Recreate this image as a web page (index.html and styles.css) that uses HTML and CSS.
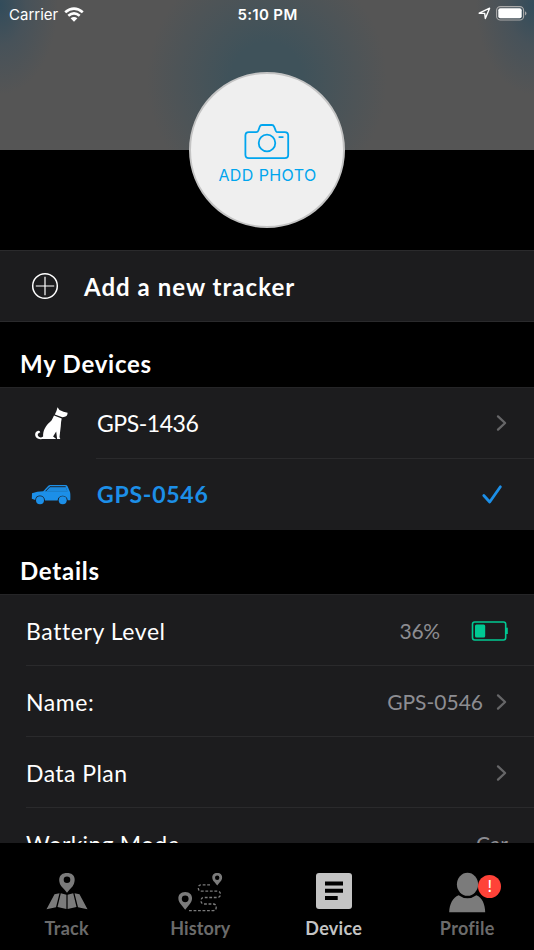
FILE: index.html
```html
<!DOCTYPE html>
<html lang="en">
<head>
<meta charset="utf-8">
<title>Device</title>
<link rel="stylesheet" href="styles.css">
</head>
<body>
<div class="app">
  <header class="hero">
    <div class="status">
      <div class="status-left"><span class="carrier">Carrier</span>
        <svg width="20" height="15" viewBox="0 0 20 15" fill="none" stroke="#fff" stroke-width="2.7"><path d="M1.2 5.3Q10-2.1 18.8 5.3M4.3 8.7Q10 4.2 15.7 8.7"/><path d="M6.6 11.2Q10 8.6 13.4 11.2L10 14.8Z" fill="#fff" stroke="none"/></svg>
      </div>
      <span class="clock">5:10 PM</span>
      <div class="status-right">
        <svg width="13" height="13" viewBox="0 0 13 13" fill="none" stroke="#fff" stroke-width="1.4" stroke-linejoin="round"><path d="M1.2 6.2 11.6 1.2 7.3 11.5 6.7 6.4Z"/></svg>
        <svg width="32" height="15" viewBox="0 0 32 15"><rect x=".6" y=".6" width="27" height="13.4" rx="3.8" fill="none" stroke="#aaa" stroke-width="1.1"/><rect x="2.3" y="2.3" width="23.4" height="10" rx="2" fill="#fff"/><path d="M29 5.2q3 2.1 0 4.3Z" fill="#aaa"/></svg>
      </div>
    </div>
  </header>
  <div class="photo-area">
    <div class="photo">
      <svg width="46" height="38" viewBox="0 0 46 38" fill="none" stroke="#00a5ee" stroke-width="1.8" stroke-linejoin="round" stroke-linecap="round"><path d="M4.8 9.2H12.2Q13.8 9.2 14.3 7.8L15.7 3.8Q16.3 2 18 2H27.8Q29.5 2 30.2 3.8L31.8 7.8Q32.4 9.2 34 9.2H40.8Q44.2 9.2 44.2 12.6V31.8Q44.2 35.2 40.8 35.2H4.8Q1.4 35.2 1.4 31.8V12.6Q1.4 9.2 4.8 9.2Z"/><circle cx="23" cy="20" r="8.3"/><path d="M35.3 14.1H38.8"/></svg>
      <span class="photo-label">ADD PHOTO</span>
    </div>
  </div>
  <main class="content">
    <div class="add-row">
      <svg width="28" height="28" viewBox="0 0 28 28" fill="none" stroke="#fff"><circle cx="14" cy="14" r="12.3" stroke-width="1.5"/><path d="M14 4.8V23.2M4.8 14H23.2" stroke-width="1.2"/></svg>
      <span class="add-label">Add a new tracker</span>
    </div>
    <h2 class="title title-devices">My Devices</h2>
    <section class="list">
      <div class="device">
        <div class="device-icon dog"><svg width="40" height="40" viewBox="0 0 40 40"><path d="M24.5 5.2 26.5 8 30.5 9.7 34.6 10.8Q34.6 14.2 31.8 14.8L29.4 15.2 21.8 12.4Q23.8 9 24.5 5.2ZM21 13.5 28.7 16.5Q27.8 20.5 27.8 24L26.5 35 27.3 37H24.1L23.2 29.5 20.1 34.5 23.3 37H9C1.5 38.5 0 30 5.1 28.8Q7.2 28.6 7.3 30.3L5.2 31.5C3.5 33.8 7 37 10.1 34.5 9.8 28 13 23.5 17 20 19.5 18 19.7 15.8 21 13.5Z" fill="#fff"/></svg></div>
        <div class="device-main divided"><span class="device-name">GPS-1436</span><svg class="chevron" width="12" height="18" viewBox="0 0 12 18"><path d="M2 2.4 9.1 9 2 15.6"/></svg></div>
      </div>
      <div class="device">
        <div class="device-icon"><svg width="40" height="22" viewBox="0 0 40 22" fill="#1c8fe8"><path fill-rule="evenodd" d="M1 9.3Q6 7.3 12.2 7.2L17.3 1.8Q18 1 19.3 1H34.2Q36 1 36.7 2.4L39 8Q39.6 10 39.3 16.3H36.7C36.3 10.2 27 10.2 26.6 16.4H14C13.5 10.2 4.7 10 4.2 16L.8 14.8ZM14.6 7.2H36.4L34.6 2.9H19.2Z"/><circle cx="9" cy="16.2" r="4"/><circle cx="31.7" cy="16.2" r="4"/><path d="M14.4 7.4 18.4 3H34.8L36.5 7.4Z" opacity=".95"/><path d="M14.6 7.2 18.9 2.7H34.7" fill="none" stroke="#1c1c1e" stroke-width=".9"/></svg></div>
        <div class="device-main"><span class="device-name selected">GPS-0546</span><svg class="check" width="22" height="22" viewBox="0 0 22 22"><path d="M2.8 11.5 8.7 18 19.4 2.8" fill="none" stroke="#1c8fe8" stroke-width="2.8" stroke-linecap="round" stroke-linejoin="round"/></svg></div>
      </div>
    </section>
    <h2 class="title title-details">Details</h2>
    <section class="list details">
      <div class="detail"><span class="label battery-label">Battery Level</span><span class="value percent">36%</span><svg class="battery" width="38" height="22" viewBox="0 0 38 22"><rect x="1.5" y="2" width="33.2" height="18" rx="2.2" fill="none" stroke="#00c993" stroke-width="1.6"/><rect x="4" y="4.5" width="10.2" height="13" rx="1.5" fill="#00c993"/><path d="M34.7 7.7H36.8V14H34.7Z" fill="#00c993"/></svg></div>
      <div class="detail"><span class="label name-label">Name:</span><span class="value name-value">GPS-0546</span><svg class="chevron" width="12" height="18" viewBox="0 0 12 18"><path d="M2 2.4 9.1 9 2 15.6"/></svg></div>
      <div class="detail"><span class="label plan-label">Data Plan</span><svg class="chevron" width="12" height="18" viewBox="0 0 12 18"><path d="M2 2.4 9.1 9 2 15.6"/></svg></div>
      <div class="detail"><span class="label mode-label">Working Mode</span><span class="value car">Car</span></div>
    </section>
  </main>
  <nav class="tabs">
    <div class="tab"><svg width="44" height="44" viewBox="0 0 44 44" fill="#7b7b7b"><path fill-rule="evenodd" d="M22 2C12.5 2 13.3 11 16.3 15.2Q20 19 22 21.7 24 19 27.7 15.2C30.7 11 31.5 2 22 2ZM22 5.4A3.3 3.3 0 1 1 22 12 3.3 3.3 0 0 1 22 5.4Z"/><path d="M9.5 23.2 14.5 22.3 11 36.2 1.5 38.2ZM15.8 22.3 21.4 23.7V38L12.5 36ZM22.6 23.7 28.2 22.3 31.5 36 22.6 38ZM29.5 22.3 34.5 23.2 42.5 38.2 33 36.2Z"/></svg><span class="tab-label track">Track</span></div>
    <div class="tab"><svg width="46" height="44" viewBox="0 0 46 44" fill="#7b7b7b"><path fill-rule="evenodd" d="M8.2 21C.2 21-.2 29.5 4 33.5L8.2 38.7 12.4 33.5C16.6 29.5 16.2 21 8.2 21ZM8.2 24.4A3.4 3.4 0 1 1 8.2 31.2 3.4 3.4 0 0 1 8.2 24.4ZM40.2 2C34.4 2 34.2 8 37.2 10.8L40.2 14.4 43.2 10.8C46.2 8 46 2 40.2 2ZM40.2 4.6A2.2 2.2 0 1 1 40.2 9 2.2 2.2 0 0 1 40.2 4.6Z"/><path d="M33 13.8H24.5Q21.3 13.8 21.3 17T24.5 20.2H40Q43.5 20.2 43.5 23.3T40 26.5H27Q24 26.5 24 29.7T27 33H36.2Q39.2 33 39.2 36.3T36.2 39.6H12" fill="none" stroke="#7b7b7b" stroke-width="1.3" stroke-dasharray="2.8 1.7"/></svg><span class="tab-label history">History</span></div>
    <div class="tab active"><svg width="44" height="44" viewBox="0 0 44 44"><rect x="4" y="2" width="36" height="36" rx="3" fill="#c4c4c4"/><path d="M13 12.5H31M13 19.8H31M13 27H25.7" stroke="#000" stroke-width="4"/></svg><span class="tab-label device-label">Device</span></div>
    <div class="tab"><div class="profile-icon"><svg width="44" height="44" viewBox="0 0 44 44" fill="#7b7b7b"><ellipse cx="22.5" cy="13.3" rx="10.6" ry="11.5"/><path d="M13.6 24.2Q22.5 30.5 31.4 24.2C37.2 26.5 40 33 40.2 41.3H4.2C4.4 33 7.8 26.5 13.6 24.2Z"/></svg><span class="badge">!</span></div><span class="tab-label profile">Profile</span></div>
  </nav>
</div>
</body>
</html>
```
FILE: styles.css
```css
* { box-sizing: border-box; }
body { margin: 0; background: #000; color: #fff; font-family: Lato, "Liberation Sans", sans-serif; }
.app { width: 534px; height: 950px; display: flex; flex-direction: column; overflow: hidden; background: #000; }
.hero {
  height: 150px; flex: none;
  background:
    radial-gradient(ellipse 58px 90px at 0 5px, #324c5b, rgba(62, 80, 92, .6) 45%, transparent),
    radial-gradient(ellipse 58px 90px at 534px 5px, #324c5b, rgba(62, 80, 92, .6) 45%, transparent),
    radial-gradient(ellipse 120px 125px at 267px 80px, #3f525a 30%, rgba(70, 83, 89, .7) 65%, transparent),
    #555;
}
.status { display: grid; grid-template-columns: 1fr auto 1fr; align-items: center; height: 28px; padding: 0 8px 0 9px; font-family: Inter, sans-serif; }
.status-left, .status-right { display: flex; align-items: center; gap: 6px; }
.status-right { justify-content: flex-end; gap: 5px; margin: -1px -2px 0 0; }
.carrier { font-size: 15px; }
.clock { font-size: 15px; font-weight: 600; letter-spacing: .35px; }
.photo-area { height: 100px; flex: none; display: flex; justify-content: center; }
.photo { width: 156px; height: 156px; margin-top: -78px; border-radius: 50%; border: 2px solid #c4c4c4; background: #efefef; display: flex; flex-direction: column; align-items: center; padding-top: 49px; flex: none; }
.photo-label { margin-top: 4px; padding-left: 1px; font: 16px/20px Inter, sans-serif; letter-spacing: .4px; color: #00a5ee; white-space: nowrap; }
.content { flex: 1; min-height: 0; overflow: hidden; }
.add-row { height: 72px; display: flex; align-items: center; background: #1c1c1e; border-top: 1px solid #2a2a2c; border-bottom: 1px solid #2a2a2c; padding-left: 31px; gap: 25px; }
.add-label { font-size: 24px; font-weight: 700; letter-spacing: 1.03px; white-space: nowrap; }
.title { margin: 0; font-size: 24px; font-weight: 700; line-height: 30px; padding-left: 20px; letter-spacing: .75px; }
.title-devices { height: 65px; padding-top: 27px; }
.title-details { height: 64px; padding-top: 26px; }
.list { background: #1c1c1e; border-top: 1px solid #252527; }
.device { height: 71px; display: flex; }
.device-icon { width: 96px; display: flex; align-items: center; padding-left: 31px; }
.dog { padding: 0 0 4px 33px; }
.device-main { flex: 1; display: flex; align-items: center; justify-content: space-between; padding-right: 26px; }
.divided { border-bottom: 1px solid #2a2a2c; }
.device-name { font-size: 23px; padding-left: 1px; letter-spacing: -.45px; }
.selected { font-weight: 700; color: #1c8fe8; letter-spacing: .75px; padding-bottom: 2px; }
.check { margin-right: 5px; }
.chevron { fill: none; stroke: #666668; stroke-width: 2.3; stroke-linecap: round; stroke-linejoin: round; flex: none; }
.detail { height: 71px; margin-left: 26px; padding: 1px 26px 0 0; display: flex; align-items: center; border-bottom: 1px solid #2a2a2c; }
.label { font-size: 23px; white-space: nowrap; margin-right: auto; }
.battery-label { letter-spacing: .58px; }
.name-label { letter-spacing: .6px; }
.plan-label { letter-spacing: .45px; }
.mode-label { letter-spacing: .25px; }
.value { font-size: 21px; color: #8d8d92; white-space: nowrap; }
.percent { margin-right: 31px; letter-spacing: -.2px; }
.battery { margin: 1px -1px 0 0; }
.name-value { margin-right: 13px; }
.tabs { height: 107px; flex: none; display: grid; grid-template-columns: repeat(4, 1fr); padding-top: 28px; background: #000; }
.tab { display: flex; flex-direction: column; align-items: center; color: #6b6b6b; }
.tab-label { font-size: 18px; font-weight: 700; line-height: 24px; margin-top: 1px; letter-spacing: .3px; }
.history { letter-spacing: .1px; }
.active { color: #c4c4c4; }
.profile-icon { position: relative; height: 44px; }
.badge { position: absolute; left: 33px; top: 4px; width: 23px; height: 23px; border-radius: 50%; background: #ff4238; color: #fff; font: 16px/23px Inter, sans-serif; text-align: center; }
```
